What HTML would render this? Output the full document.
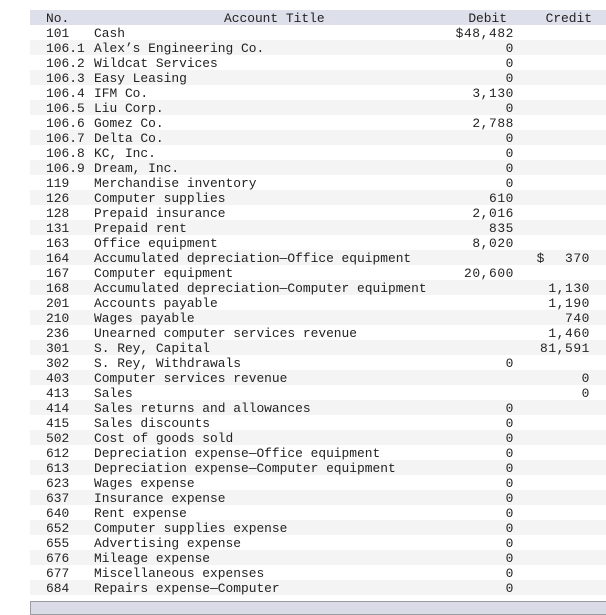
<!DOCTYPE html>
<html><head><meta charset="utf-8"><style>
html,body{margin:0;padding:0;background:#fff;width:606px;height:610px;overflow:hidden}
body{font-family:"Liberation Mono",monospace;font-size:12.9px;color:#222}
.r{position:absolute;left:30px;width:576px;height:15px;line-height:15px}
.r span{top:1px}
.g{background:#f4f4f4}
.h{background:#dde0ea;top:10px}
.n{position:absolute;left:16px}
.t{position:absolute;left:64px;white-space:nowrap}
.d{position:absolute;right:92px;letter-spacing:0.6px}
.c{position:absolute;right:16px;letter-spacing:0.6px}
.bar{position:absolute;left:30px;top:601px;width:580px;height:12px;background:#d9dce7;border:1px solid #9a9ca4}
</style></head><body>
<div class="r h"><span class="n" style="left:16px">No.</span><span class="t" style="left:194px">Account Title</span><span class="d" style="right:99px;letter-spacing:0">Debit</span><span class="c" style="right:14px;letter-spacing:0">Credit</span></div>
<div class="r" style="top:25px"><span class="n">101</span><span class="t">Cash</span><span class="d">$48,482</span></div>
<div class="r g" style="top:40px"><span class="n">106.1</span><span class="t">Alex’s Engineering Co.</span><span class="d">0</span></div>
<div class="r" style="top:55px"><span class="n">106.2</span><span class="t">Wildcat Services</span><span class="d">0</span></div>
<div class="r g" style="top:70px"><span class="n">106.3</span><span class="t">Easy Leasing</span><span class="d">0</span></div>
<div class="r" style="top:85px"><span class="n">106.4</span><span class="t">IFM Co.</span><span class="d">3,130</span></div>
<div class="r g" style="top:100px"><span class="n">106.5</span><span class="t">Liu Corp.</span><span class="d">0</span></div>
<div class="r" style="top:115px"><span class="n">106.6</span><span class="t">Gomez Co.</span><span class="d">2,788</span></div>
<div class="r g" style="top:130px"><span class="n">106.7</span><span class="t">Delta Co.</span><span class="d">0</span></div>
<div class="r" style="top:145px"><span class="n">106.8</span><span class="t">KC, Inc.</span><span class="d">0</span></div>
<div class="r g" style="top:160px"><span class="n">106.9</span><span class="t">Dream, Inc.</span><span class="d">0</span></div>
<div class="r" style="top:175px"><span class="n">119</span><span class="t">Merchandise inventory</span><span class="d">0</span></div>
<div class="r g" style="top:190px"><span class="n">126</span><span class="t">Computer supplies</span><span class="d">610</span></div>
<div class="r" style="top:205px"><span class="n">128</span><span class="t">Prepaid insurance</span><span class="d">2,016</span></div>
<div class="r g" style="top:220px"><span class="n">131</span><span class="t">Prepaid rent</span><span class="d">835</span></div>
<div class="r" style="top:235px"><span class="n">163</span><span class="t">Office equipment</span><span class="d">8,020</span></div>
<div class="r g" style="top:250px"><span class="n">164</span><span class="t">Accumulated depreciation—Office equipment</span><span class="c" style="right:61px">$</span><span class="c">370</span></div>
<div class="r" style="top:265px"><span class="n">167</span><span class="t">Computer equipment</span><span class="d">20,600</span></div>
<div class="r g" style="top:280px"><span class="n">168</span><span class="t">Accumulated depreciation—Computer equipment</span><span class="c">1,130</span></div>
<div class="r" style="top:295px"><span class="n">201</span><span class="t">Accounts payable</span><span class="c">1,190</span></div>
<div class="r g" style="top:310px"><span class="n">210</span><span class="t">Wages payable</span><span class="c">740</span></div>
<div class="r" style="top:325px"><span class="n">236</span><span class="t">Unearned computer services revenue</span><span class="c">1,460</span></div>
<div class="r g" style="top:340px"><span class="n">301</span><span class="t">S. Rey, Capital</span><span class="c">81,591</span></div>
<div class="r" style="top:355px"><span class="n">302</span><span class="t">S. Rey, Withdrawals</span><span class="d">0</span></div>
<div class="r g" style="top:370px"><span class="n">403</span><span class="t">Computer services revenue</span><span class="c">0</span></div>
<div class="r" style="top:385px"><span class="n">413</span><span class="t">Sales</span><span class="c">0</span></div>
<div class="r g" style="top:400px"><span class="n">414</span><span class="t">Sales returns and allowances</span><span class="d">0</span></div>
<div class="r" style="top:415px"><span class="n">415</span><span class="t">Sales discounts</span><span class="d">0</span></div>
<div class="r g" style="top:430px"><span class="n">502</span><span class="t">Cost of goods sold</span><span class="d">0</span></div>
<div class="r" style="top:445px"><span class="n">612</span><span class="t">Depreciation expense—Office equipment</span><span class="d">0</span></div>
<div class="r g" style="top:460px"><span class="n">613</span><span class="t">Depreciation expense—Computer equipment</span><span class="d">0</span></div>
<div class="r" style="top:475px"><span class="n">623</span><span class="t">Wages expense</span><span class="d">0</span></div>
<div class="r g" style="top:490px"><span class="n">637</span><span class="t">Insurance expense</span><span class="d">0</span></div>
<div class="r" style="top:505px"><span class="n">640</span><span class="t">Rent expense</span><span class="d">0</span></div>
<div class="r g" style="top:520px"><span class="n">652</span><span class="t">Computer supplies expense</span><span class="d">0</span></div>
<div class="r" style="top:535px"><span class="n">655</span><span class="t">Advertising expense</span><span class="d">0</span></div>
<div class="r g" style="top:550px"><span class="n">676</span><span class="t">Mileage expense</span><span class="d">0</span></div>
<div class="r" style="top:565px"><span class="n">677</span><span class="t">Miscellaneous expenses</span><span class="d">0</span></div>
<div class="r g" style="top:580px"><span class="n">684</span><span class="t">Repairs expense—Computer</span><span class="d">0</span></div>
<div class="bar"></div>
</body></html>
